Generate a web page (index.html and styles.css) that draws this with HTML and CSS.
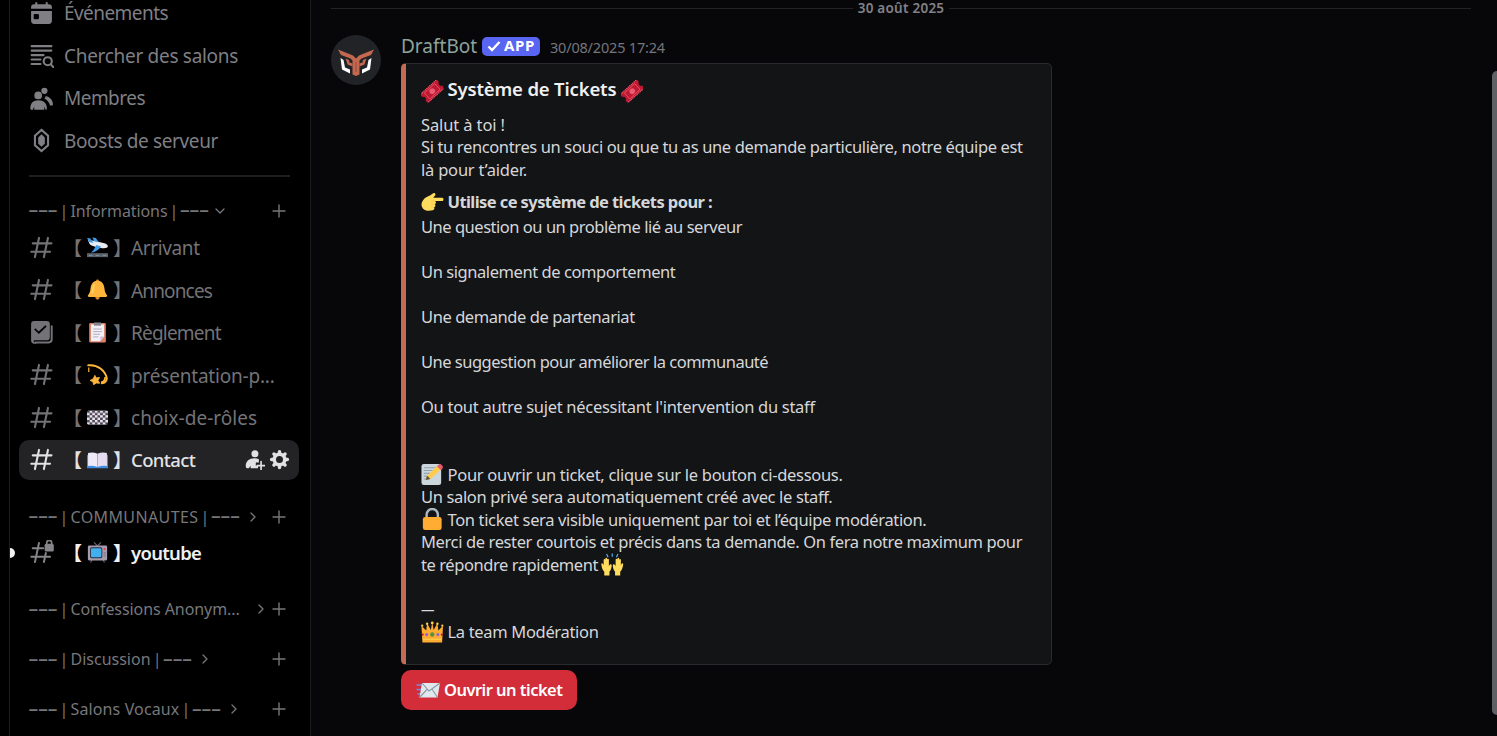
FILE: index.html
```html
<!DOCTYPE html>
<html lang="fr">
<head>
<meta charset="utf-8">
<title>Contact</title>
<link rel="stylesheet" href="styles.css">
</head>
<body>
<svg class="defs" aria-hidden="true">
  <symbol id="hash" viewBox="0 0 24 24"><path d="M9.600 2.800 5.700 21.200M18.200 2.800 14.300 21.200M3.600 8h18M2.200 16h18" fill="none" stroke="currentColor" stroke-width="2" stroke-linecap="round"/></symbol>
  <symbol id="plus" viewBox="0 0 14 14"><path d="M7 1v12M1 7h12" fill="none" stroke="currentColor" stroke-width="1.400" stroke-linecap="round"/></symbol>
  <symbol id="right" viewBox="0 0 8 12"><path d="m2 2 4 4-4 4" fill="none" stroke="currentColor" stroke-width="1.300" stroke-linecap="round" stroke-linejoin="round"/></symbol>
  <symbol id="ticket" viewBox="0 0 24 24"><g transform="rotate(-42 12 12)"><path d="M0 6h24v3.400a2.700 2.700 0 0 0 0 5.200V18H0v-3.400a2.700 2.700 0 0 0 0-5.200Z" fill="#be1931"/><path d="M4.500 7.800h15v8.400h-15Z" fill="none" stroke="#ea5a72" stroke-width=".8"/><circle cx="12" cy="12" r="3" fill="#ea5a72"/><path d="M.5 6h23M.5 18h23" stroke="#ee5068" stroke-width="1.200" stroke-dasharray="1.500 .6"/></g></symbol>
</svg>
<div class="app">
  <nav class="sidebar">
    <div class="row"><svg class="ico" viewBox="0 0 24 24"><path fill="currentColor" fill-rule="evenodd" d="M7 1a1 1 0 0 1 1 1v1h8V2a1 1 0 1 1 2 0v1h1a3 3 0 0 1 3 3v1.500H2V6a3 3 0 0 1 3-3h1V2a1 1 0 0 1 1-1ZM2 9.500h20V19a3 3 0 0 1-3 3H5a3 3 0 0 1-3-3Zm3.500 3a1 1 0 0 0-1 1v3a1 1 0 0 0 1 1h3a1 1 0 0 0 1-1v-3a1 1 0 0 0-1-1Z"/></svg><span class="t-events">Événements</span></div>
    <div class="row"><svg class="ico" viewBox="0 0 24 24"><path d="M2.500 3h19M2.500 7.300h19M2.500 11.600h11.500M2.500 15.900h8.500M2.500 20.200h8.500" stroke="currentColor" stroke-width="2" stroke-linecap="round"/><circle cx="18" cy="17.500" r="3.900" fill="none" stroke="currentColor" stroke-width="2"/><path d="m21 20.500 2.300 2.500" stroke="currentColor" stroke-width="2" stroke-linecap="round"/></svg><span class="t-browse">Chercher des salons</span></div>
    <div class="row"><svg class="ico" viewBox="0 0 24 24"><circle cx="14.800" cy="4.600" r="3" fill="currentColor"/><path fill="currentColor" d="M16 9.500c4 .8 7 4 7 8 0 .8-.5 1.200-1.300 1.200h-1.500c-.8-3-2.500-5.200-5.500-6.700.8-.7 1.200-1.500 1.300-2.500ZM12.500 9a3.700 3.700 0 1 1-7.400 0 3.700 3.700 0 0 1 7.400 0ZM1.300 21.500C1.300 16.500 4 13.700 9 13.700s8.200 3 8.200 7.800c0 .8-.5 1.200-1.200 1.200l-1.300-3v3H5v-3l-1.300 3H2.500c-.8 0-1.200-.4-1.200-1.200Z"/></svg><span class="t-members">Membres</span></div>
    <div class="row"><svg class="ico" viewBox="0 0 24 24"><path d="M12 1.800 18.300 7.300v9.400L12 22.200l-6.300-5.500V7.300Z" fill="none" stroke="currentColor" stroke-width="2"/><path d="m12 6 3.200 3v6L12 18l-3.200-3V9Z" fill="currentColor"/></svg><span class="t-boosts">Boosts de serveur</span></div>
    <div class="separator"></div>

    <div class="category"><span class="dash">–––</span><span class="bar">|</span><span class="t-info">Informations</span><span class="bar">|</span><span class="dash">–––</span><svg class="down" viewBox="0 0 12 8"><path d="m2 2 4 4 4-4" fill="none" stroke="currentColor" stroke-width="1.300" stroke-linecap="round" stroke-linejoin="round"/></svg><svg class="add"><use href="#plus"/></svg></div>

    <div class="row channel"><svg class="ico"><use href="#hash"/></svg><span class="open">【</span><svg class="emoji" viewBox="0 0 24 24"><path d="M0 18.500h24V23H0Z" fill="#59636f"/><path d="M2 21h4M10 21h4M18 21h4" stroke="#8b96a3"/><path d="M1 3.500c7 .5 12 2.500 19 3.500 3 .5 5 3.500 3 5-2 1.300-5 1-8 .3C10 11.500 4.500 10 3 8Z" fill="#e7ebf2"/><path d="m0 1 3.500.3 4 5.500-5-1ZM6 .5l4 .5 3.500 5-5-1Z" fill="#3f9be8"/><path d="m10.500 9 5.500 1.800c-2 3-5 5.500-8.500 6.700l-3 .3c3-2.500 4.500-5.300 6-8.800Z" fill="#3f9be8"/></svg><span class="close">】</span><span class="name t-arrivant">Arrivant</span></div>
    <div class="row channel"><svg class="ico"><use href="#hash"/></svg><span class="open">【</span><svg class="emoji" viewBox="0 0 24 24"><circle cx="12" cy="2.200" r="1.700" fill="#d98a22"/><circle cx="12" cy="21.200" r="2.400" fill="#d98a22"/><path d="M12 2c5 0 7.500 4 8 9 .3 4 1.700 6 2.900 7.500.6 1-.2 2-1.500 2H2.600c-1.300 0-2.100-1-1.500-2C2.300 17 3.700 15 4 11c.5-5 3-9 8-9Z" fill="#fdb53c"/><path d="M8.500 6c-2 3-1 7-3 10.500" stroke="#ffd46a" stroke-width="2" fill="none"/></svg><span class="close">】</span><span class="name t-annonces">Annonces</span></div>
    <div class="row channel"><svg class="ico" viewBox="0 0 24 24"><path d="M21.800 6v12.500a3 3 0 0 1-3 3H6" fill="none" stroke="currentColor" stroke-width="1.900" stroke-linecap="round"/><path fill="currentColor" fill-rule="evenodd" d="M5 1h12a3 3 0 0 1 3 3v12.500a3 3 0 0 1-3 3H5.500a1 1 0 0 0 0 2H7v1.200H5a3 3 0 0 1-3-3V4a3 3 0 0 1 3-3Zm1 7-1 1.200 4.500 4.300L17 6.200 15.700 5l-6.400 6Z"/></svg><span class="open">【</span><svg class="emoji" viewBox="0 0 24 24"><rect x="2.500" y="1" width="19" height="22.500" rx="1.500" fill="#dc8368"/><path d="M4.500 2.800h15v13.700L15 22H4.500Z" fill="#f3eff7"/><path d="M19.500 16.500H15V22Z" fill="#cfc4dd"/><path d="M8 .5h8v3.700H8Z" fill="#87858e"/><path d="M7 8h10M7 11h10M7 14h8M7 17h6" stroke="#aaa3b7" stroke-width="1"/></svg><span class="close">】</span><span class="name t-reglement">Règlement</span></div>
    <div class="row channel"><svg class="ico"><use href="#hash"/></svg><span class="open">【</span><svg class="emoji" viewBox="0 0 24 24"><path d="M1.500 1.500C12 0 21 8 22.500 16c.5 3-2 5.800-5.500 6" fill="none" stroke="#fdb53c" stroke-width="2.300" stroke-linecap="round"/><path d="M16 21c4-1 5-3 4.500-6" fill="none" stroke="#fdb53c" stroke-width="2"/><path d="m9 13 1.500 3 3.800-.7-1.800 3.300 2 3.400-4-.3-3 2-.7-3.400L3.500 18.800l3.500-1.700Z" fill="#fdb53c" stroke="#fdb53c" stroke-linejoin="round"/><path d="M2 4v5" stroke="#f0a82c" stroke-width="1.500"/></svg><span class="close">】</span><span class="name t-presentation">présentation-p...</span></div>
    <div class="row channel"><svg class="ico"><use href="#hash"/></svg><span class="open">【</span><svg class="emoji" viewBox="0 0 24 24"><defs><pattern id="check" x="0" y="4" width="6" height="5.400" patternUnits="userSpaceOnUse"><path d="M0 0h6v5.400H0Z" fill="#ece6f2"/><path d="M0 0h3v2.700H0ZM3 2.700h3v2.700H3Z" fill="#4c4552"/></pattern></defs><rect x="0" y="4" width="24" height="16.200" rx="2" fill="url(#check)"/></svg><span class="close">】</span><span class="name t-roles">choix-de-rôles</span></div>
    <div class="row channel active"><svg class="ico"><use href="#hash"/></svg><span class="open">【</span><svg class="emoji" viewBox="0 0 24 24"><path d="M0 7h24v15H0Z" fill="#3d8de0"/><path d="M1.200 4.500Q7 3 12 5.500V20.500Q6 18.500 1.200 19.500Z" fill="#f0e9f8"/><path d="M22.800 4.500Q17 3 12 5.500V20.500q6-2 10.800-1Z" fill="#e5dcf1"/><path d="M12 5.500V20.500" stroke="#b3a3c8"/></svg><span class="close">】</span><span class="name t-contact">Contact</span><span class="tools"><svg viewBox="0 0 24 24"><path fill="currentColor" d="M16.500 5.500a4 4 0 1 1-8 0 4 4 0 0 1 8 0ZM2 19.500C2 14 6 10.700 12 10.700c2 0 3.700.4 5 1.100v3.700h-3.500v4H16V22H7.500v-3L5.500 22H3.500C2.500 22 2 21 2 19.500Z"/><path d="M19.500 14.500v9M15 19h9" stroke="currentColor" stroke-width="1.900" stroke-linecap="round"/></svg><svg viewBox="0 0 24 24"><circle cx="12" cy="12" r="6" fill="none" stroke="currentColor" stroke-width="4"/><path d="M12 3v2M12 19v2M3 12h2M19 12h2M5.700 5.700 7 7M17 17l1.300 1.300M5.700 18.300 7 17M17 7l1.300-1.300" stroke="currentColor" stroke-width="4" stroke-linecap="round"/></svg></span></div>

    <div class="category"><span class="dash">–––</span><span class="bar">|</span><span class="t-communautes">COMMUNAUTES</span><span class="bar">|</span><span class="dash">–––</span><svg class="chev"><use href="#right"/></svg><svg class="add"><use href="#plus"/></svg></div>
    <div class="row channel unread"><span class="pip"></span><svg class="ico" viewBox="0 0 24 24"><path d="M9.600 2.800 5.700 21.200M16.200 12.500 14.300 21.200M3.600 8h10M2.200 16h18" fill="none" stroke="currentColor" stroke-width="1.900" stroke-linecap="round"/><rect x="15" y="3.500" width="8.800" height="7.500" rx="1.500" fill="currentColor"/><path d="M17 4V2.800a2.400 2.400 0 0 1 4.800 0V4" fill="none" stroke="currentColor" stroke-width="1.600"/></svg><span class="open">【</span><svg class="emoji" viewBox="0 0 24 24"><path d="m8 .5 4 4 4-4M6 20l-2 3.500M18 20l2 3.500" stroke="#6d6475" stroke-width="1.200" fill="none"/><rect x="1" y="4" width="22" height="17" rx="1.500" fill="#a69aad"/><rect x="3.500" y="6" width="14" height="12.500" rx="2" fill="#26303d"/><rect x="4.500" y="7" width="12" height="10.500" rx="1.500" fill="#42b0ee"/><circle cx="20.200" cy="8" r="1.100" fill="#e23b55"/><path d="M19 12h2.500M19 14h2.500M19 16h2.500" stroke="#756a7e" stroke-width=".8"/></svg><span class="close">】</span><span class="name t-youtube">youtube</span></div>
    <div class="category"><span class="dash">–––</span><span class="bar">|</span><span class="t-confessions">Confessions Anonym...</span><svg class="chev wide"><use href="#right"/></svg><svg class="add"><use href="#plus"/></svg></div>
    <div class="category"><span class="dash">–––</span><span class="bar">|</span><span>Discussion</span><span class="bar">|</span><span class="dash">–––</span><svg class="chev"><use href="#right"/></svg><svg class="add"><use href="#plus"/></svg></div>
    <div class="category"><span class="dash">–––</span><span class="bar">|</span><span class="t-vocaux">Salons Vocaux</span><span class="bar">|</span><span class="dash">–––</span><svg class="chev"><use href="#right"/></svg><svg class="add"><use href="#plus"/></svg></div>
  </nav>

  <main class="chat">
    <div class="date"><span>30 août 2025</span></div>
    <article class="message">
      <svg class="avatar" viewBox="0 0 50 50"><circle cx="25" cy="25" r="25" fill="#212326"/><path d="M9.500 23 12.500 25 14 32.500 19 34.500v4L11 34.500ZM40.500 23 37.500 25 36 32.500 31 34.500v4L39 34.500Z" fill="#fff"/><path d="M7 14.500 22 20.500 25 23.500 28 20.500 43 14.500 40 20 30.500 23.500 28.500 25.500V39.500L25 41 21.500 39.500V25.500L19.500 23.500 10 20Z" fill="#c4684f"/><path d="M14.500 23.500 18 25 18.500 27.500 21.500 28.500V31.500L16.500 29.500 15.500 26ZM35.500 23.500 32 25 31.500 27.500 28.500 28.500V31.500L33.500 29.500 34.500 26Z" fill="#c4684f"/><path d="M25 27V37" stroke="#8f4d3c" stroke-width="1"/></svg>
      <div class="body">
        <header class="head"><span class="author">DraftBot</span><span class="badge"><svg viewBox="0 0 14 12"><path d="m1.500 6.500 3.500 3.500L12.500 2" fill="none" stroke="#fff" stroke-width="2.400"/></svg><span>APP</span></span><time>30/08/2025 17:24</time></header>
        <section class="embed">
          <h2><svg class="em"><use href="#ticket"/></svg><span>Système de Tickets</span><svg class="em after"><use href="#ticket"/></svg></h2>
          <div class="intro">
            <p class="t-hello">Salut à toi !</p>
            <p class="t-l37">Si tu rencontres un souci ou que tu as une demande particulière, notre équipe est</p>
            <p class="t-l21">là pour t’aider.</p>
          </div>
          <h3><svg class="em" viewBox="0 0 24 24"><path d="M2 9c2-3 5-4 8-5.500 2-1.300 3.500-3 5-2 1.300 1-.5 3-2 4.500h9.500c2 0 2 3.500 0 3.500H15c1.500 1 1 3-.3 3.500 1.200 1 .7 3-.7 3.300.8 1.300 0 3-1.500 3.200C8 20.500 4 20 2 17.500c-2-2.500-2-6 0-8.500Z" fill="#ffdc5d"/><path d="M15 9.700h-4.500M14.500 13H11M14 16.300h-3" stroke="#f2c04a" stroke-width=".8"/></svg><span>Utilise ce système de tickets pour :</span></h3>
          <div class="lines">
            <p class="t-l48">Une question ou un problème lié au serveur</p>
            <p></p>
            <p class="t-l43">Un signalement de comportement</p>
            <p></p>
            <p class="t-l43">Une demande de partenariat</p>
            <p></p>
            <p class="t-l50">Une suggestion pour améliorer la communauté</p>
            <p></p>
            <p class="t-l29">Ou tout autre sujet nécessitant l'intervention du staff</p>
            <p></p>
            <p></p>
            <p class="t-l29"><svg class="em" viewBox="0 0 24 24"><rect x=".5" y="1" width="21" height="22.500" rx="2.500" fill="#ccd6dd"/><path d="M3 5h13M3 8h10M3 11h8M3 14h6M3 17h5" stroke="#8fa2b0" stroke-width="1.200"/><path d="m5 18 1.500-4.500L18 2.500l4 4L10 17Z" fill="#ffcc4d"/><path d="m5 18 1.500-4.500L10 17Z" fill="#574d49"/><path d="m17 3.500 2-2c1.500-1.500 5.500 2 4 4l-2 2Z" fill="#ea596e"/></svg><span>Pour ouvrir un ticket, clique sur le bouton ci-dessous.</span></p>
            <p class="t-l36">Un salon privé sera automatiquement créé avec le staff.</p>
            <p class="t-l36"><svg class="em" viewBox="0 0 24 24"><path d="M6 11V7a6 6 0 0 1 12 0v4" fill="none" stroke="#aab8c2" stroke-width="2.600"/><rect x="2" y="9.500" width="20" height="14" rx="2.500" fill="#ffac33"/></svg><span>Ton ticket sera visible uniquement par toi et l’équipe modération.</span></p>
            <p class="t-l38">Merci de rester courtois et précis dans ta demande. On fera notre maximum pour</p>
            <p class="t-l43"><span>te répondre rapidement</span><svg class="em after" viewBox="0 0 24 24"><path d="m6 1 1.500 3.500M12 .5V4M18 1l-1.500 3.500" stroke="#55acee" stroke-width="1.300"/><path id="hand" d="M3.500 24v-4C1.500 18 .800 15.500.300 12c0-1.500 1.500-1.500 2 0L2.800 13V7.500c0-1.300 1.600-1.300 1.800 0V6c0-1.300 1.700-1.300 1.900 0v1c0-1.200 1.700-1.200 1.900 0V14c.8-2 2.800-2.500 3-1 0 3-1 5.500-2.400 7v4Z" fill="#ffdc5d"/><use href="#hand" transform="matrix(-1 0 0 1 24 0)"/></svg></p>
            <p></p>
            <p><span class="rule">—</span></p>
            <p class="t-l33"><svg class="em" viewBox="0 0 24 24"><path d="M1.500 23 .5 5l5 5L6.500 2.500l4 7L12 1l1.500 8.500 4-7L18.500 10l5-5-1 18Z" fill="#ffac33"/><circle cx="12" cy="2" r="1.500" fill="#ffcc4d"/><circle cx="6.500" cy="3" r="1.300" fill="#ffcc4d"/><circle cx="17.500" cy="3" r="1.300" fill="#ffcc4d"/><circle cx="1.300" cy="5" r="1.200" fill="#ffcc4d"/><circle cx="22.700" cy="5" r="1.200" fill="#ffcc4d"/><path d="M2 19.500h20" stroke="#ffcc4d" stroke-width="1.300"/><circle cx="12" cy="14.500" r="2.400" fill="#5c913b"/><circle cx="6" cy="14.500" r="1.700" fill="#9266cc"/><circle cx="18" cy="14.500" r="1.700" fill="#9266cc"/><circle cx="1.800" cy="14.500" r="1.200" fill="#be1931"/><circle cx="22.200" cy="14.500" r="1.200" fill="#be1931"/></svg><span>La team Modération</span></p>
          </div>
        </section>
        <button class="open-ticket"><svg viewBox="0 0 24 18"><path d="M0 4h6M0 8.500h5M1 13h4" stroke="#7d8be0" stroke-width="1.500"/><path d="M5.500 2h18L21 16.500H3Z" fill="#e1e8ed"/><path d="m5.500 2 7 8 11-8M3 16.500l7.500-8M21 16.500 15.500 8" fill="none" stroke="#8899a6" stroke-width="1.100"/></svg><span>Ouvrir un ticket</span></button>
      </div>
    </article>
    <div class="scrollbar"></div>
  </main>
</div>
</body>
</html>
```
FILE: styles.css
```css
* { box-sizing: border-box; }
body { margin: 0; background: #000; font-family: "Noto Sans", sans-serif; color: #d6d7da; }
p, h2, h3 { margin: 0; }
.defs { position: absolute; width: 0; height: 0; }
.app { display: flex; width: 1497px; height: 736px; overflow: hidden; white-space: nowrap; }

/* Sidebar */
.sidebar { display: flex; flex-direction: column; width: 302px; margin-left: 9px; border-left: 1px solid #1d1d1f; border-right: 1px solid #1d1d1f; padding-left: 9px; background: #000; flex: none; }
.row { display: flex; align-items: center; height: 40px; margin-bottom: 2.5px; width: 280px; padding-left: 10px; font-size: 19px; color: #7f7f84; border-radius: 10px; position: relative; flex: none; }
.row:first-child { margin-top: -7px; }
.ico { width: 25px; height: 25px; margin-right: 10px; flex: none; }
.separator { height: 2px; margin: 12.4px 0 0 10px; width: 261px; background: #1f1f21; flex: none; }
.category { display: flex; align-items: center; height: 31.5px; padding-left: 10px; margin-top: 18.5px; width: 280px; font-size: 16px; color: #77777b; flex: none; }
.separator + .category { margin-top: 17.5px; margin-bottom: 1px; }
.dash { width: 29px; font-size: 19.3px; font-weight: 500; margin: -4px 0 0 -0.5px; padding-right: 0.5px; }
.bar { width: 13px; text-align: center; }
.down { width: 12px; height: 8px; margin-left: 5px; }
.chev { width: 8px; height: 12px; margin-left: 9px; }
.chev.wide { margin-left: 17px; }
.add { width: 14px; height: 14px; margin-left: auto; margin-right: 13px; }
.channel { color: #737377; }
.channel .ico { margin-right: 8px; }
.open, .close { font-family: "Noto Sans CJK SC", sans-serif; display: flex; width: 20px; flex: none; }
.open { justify-content: flex-end; }
.emoji { width: 21px; height: 21px; margin: 0 5px; flex: none; }
.name { margin: 2px 0 0 -2px; }
.active { background: #232326; color: #e2e2e5; font-weight: 500; }
.tools { display: flex; gap: 4px; margin-left: auto; margin-right: 9px; }
.tools svg { width: 21px; height: 21px; }
.unread { color: #f0f0f0; font-weight: 600; margin-top: 0.5px; margin-bottom: 2px; }
.unread .ico { color: #85858a; }
.active .name, .unread .name { margin-top: 0; }
.pip { position: absolute; left: -9px; top: 15px; width: 5px; height: 10px; background: #f0f0f0; border-radius: 0 5px 5px 0; }

/* Per-label tracking */
.t-events { letter-spacing: -.56px; }
.t-browse { letter-spacing: -.3px; }
.t-members { letter-spacing: -.53px; }
.t-boosts { letter-spacing: -.37px; }
.t-info { letter-spacing: -.1px; }
.t-arrivant { letter-spacing: -.38px; }
.t-annonces { letter-spacing: -.85px; }
.t-reglement { letter-spacing: -.8px; }
.t-presentation { letter-spacing: -.2px; }
.t-roles { letter-spacing: .04px; }
.t-contact { font-size: 18.5px; letter-spacing: -.6px; }
.t-communautes { letter-spacing: .39px; }
.t-youtube { font-size: 18.5px; letter-spacing: -.7px; }
.t-confessions { letter-spacing: -.07px; }
.t-vocaux { letter-spacing: .13px; }
.t-hello { letter-spacing: -.12px; }
.t-l21 { letter-spacing: -.21px; }
.t-l29 { letter-spacing: -.29px; }
.t-l33 { letter-spacing: -.33px; }
.t-l36 { letter-spacing: -.355px; }
.t-l37 { letter-spacing: -.37px; }
.t-l38 { letter-spacing: -.38px; }
.t-l43 { letter-spacing: -.43px; }
.t-l48 { letter-spacing: -.48px; }
.t-l50 { letter-spacing: -.5px; }

/* Conversation */
.chat { flex: 1; background: #070709; padding-left: 20px; position: relative; }
.date { display: flex; align-items: center; gap: 5px; width: 1140px; height: 17px; font-size: 13.5px; font-weight: 600; color: #828288; letter-spacing: .25px; }
.date span { margin-top: -2px; }
.date::before, .date::after { content: ""; flex: 1; height: 1px; background: #232326; }
.message { display: flex; gap: 20px; margin-top: 18px; }
.avatar { width: 50px; height: 50px; flex: none; }
.head { display: flex; align-items: center; height: 22px; margin-bottom: 6px; }
.author { width: 76px; font-size: 19px; color: #8ea39c; margin-right: 5px; }
.badge { display: flex; align-items: center; gap: 3px; width: 58px; height: 19px; padding-left: 5px; border-radius: 5px; background: #5865f2; color: #fff; font-size: 15px; font-weight: 700; letter-spacing: .6px; }
.badge svg { width: 14px; height: 12px; }
.badge span { margin-top: -2px; }
.head time { font-size: 14.5px; color: #75757b; margin: 2px 0 0 10px; letter-spacing: -.19px; }
.embed { width: 651px; height: 602px; border: 1px solid #2a2b2e; border-left: 5px solid #c46b56; border-radius: 5px; background: #131416; padding: 11px 15px; font-size: 16.5px; }
.embed h2, .embed h3, .embed p { display: flex; align-items: center; }
.em { width: 22.5px; height: 22.5px; margin-right: 4px; flex: none; }
.em.after { margin: 0 0 0 3.5px; }
.embed h2 { height: 27px; font-size: 18.5px; font-weight: 600; color: #f0f0f2; letter-spacing: -.16px; }
.embed h2 .em { margin: 0 4px 0 0; position: relative; top: 3px; }
.embed h2 .em.after { margin: 0 0 0 4.5px; }
.intro { margin-top: 11px; }
.embed p { height: 22.5px; }
.embed h3 { height: 24px; margin: 9px 0 2px; font-size: 16.5px; font-weight: 700; letter-spacing: -.58px; }
.embed h3 .em { margin-top: 3px; }
.rule { transform: scaleX(.82); transform-origin: left; margin-top: -2px; }
.open-ticket { display: flex; align-items: center; width: 176px; height: 40px; margin-top: 5px; padding: 0 0 2px 15px; gap: 3px; border: 0; border-radius: 10px; background: #d22d39; color: #fff; font: 600 16.5px "Noto Sans", sans-serif; letter-spacing: -.53px; }
.open-ticket svg { width: 25px; height: 18px; position: relative; top: 1px; }
.scrollbar { position: absolute; left: 1181px; top: 71px; width: 10px; height: 644px; border-radius: 5px; background: #5f5f66; }
```
